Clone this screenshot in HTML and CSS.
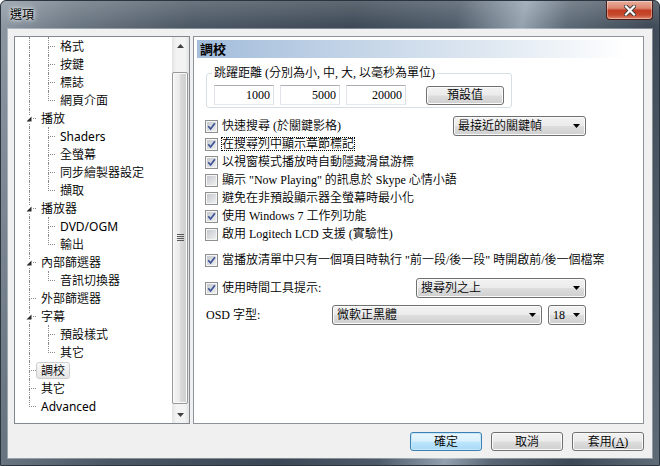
FILE: index.html
```html
<!DOCTYPE html>
<html lang="zh-Hant">
<head>
<meta charset="utf-8">
<title>選項</title>
<link rel="stylesheet" href="styles.css">
</head>
<body>
<div class="window">
  <div class="titlebar">
    <div class="title">選項</div>
    <div class="close">
      <svg width="12" height="11" viewBox="0 0 12 11"><path d="M2 1.5 L10 9.5 M10 1.5 L2 9.5" stroke="#3a3a3a" stroke-width="4" stroke-linecap="square"/><path d="M2 1.5 L10 9.5 M10 1.5 L2 9.5" stroke="#fff" stroke-width="2.2" stroke-linecap="square"/></svg>
    </div>
  </div>
  <div class="client">
    <div class="main">
      <div class="tree">
        <div class="tree-items">
          <div class="ti"><span class="g pipe"></span><span class="g c tee"></span><span class="lbl">格式</span></div>
          <div class="ti"><span class="g pipe"></span><span class="g c tee"></span><span class="lbl">按鍵</span></div>
          <div class="ti"><span class="g pipe"></span><span class="g c tee"></span><span class="lbl">標誌</span></div>
          <div class="ti"><span class="g pipe"></span><span class="g c elbow"></span><span class="lbl">網頁介面</span></div>
          <div class="ti"><span class="g c tee"><i class="exp"><svg width="17" height="18" viewBox="0 0 17 18"><rect x="6" y="6" width="8" height="8" fill="#fff"/><path d="M12.5 7.5 V12.5 H7.5 Z" fill="#2a2a2a"/></svg></i></span><span class="lbl">播放</span></div>
          <div class="ti"><span class="g pipe"></span><span class="g c tee"></span><span class="lbl">Shaders</span></div>
          <div class="ti"><span class="g pipe"></span><span class="g c tee"></span><span class="lbl">全螢幕</span></div>
          <div class="ti"><span class="g pipe"></span><span class="g c tee"></span><span class="lbl">同步繪製器設定</span></div>
          <div class="ti"><span class="g pipe"></span><span class="g c elbow"></span><span class="lbl">擷取</span></div>
          <div class="ti"><span class="g c tee"><i class="exp"><svg width="17" height="18" viewBox="0 0 17 18"><rect x="6" y="6" width="8" height="8" fill="#fff"/><path d="M12.5 7.5 V12.5 H7.5 Z" fill="#2a2a2a"/></svg></i></span><span class="lbl">播放器</span></div>
          <div class="ti"><span class="g pipe"></span><span class="g c tee"></span><span class="lbl">DVD/OGM</span></div>
          <div class="ti"><span class="g pipe"></span><span class="g c elbow"></span><span class="lbl">輸出</span></div>
          <div class="ti"><span class="g c tee"><i class="exp"><svg width="17" height="18" viewBox="0 0 17 18"><rect x="6" y="6" width="8" height="8" fill="#fff"/><path d="M12.5 7.5 V12.5 H7.5 Z" fill="#2a2a2a"/></svg></i></span><span class="lbl">內部篩選器</span></div>
          <div class="ti"><span class="g pipe"></span><span class="g c elbow"></span><span class="lbl">音訊切換器</span></div>
          <div class="ti"><span class="g c tee"></span><span class="lbl">外部篩選器</span></div>
          <div class="ti"><span class="g c tee"><i class="exp"><svg width="17" height="18" viewBox="0 0 17 18"><rect x="6" y="6" width="8" height="8" fill="#fff"/><path d="M12.5 7.5 V12.5 H7.5 Z" fill="#2a2a2a"/></svg></i></span><span class="lbl">字幕</span></div>
          <div class="ti"><span class="g pipe"></span><span class="g c tee"></span><span class="lbl">預設樣式</span></div>
          <div class="ti"><span class="g pipe"></span><span class="g c elbow"></span><span class="lbl">其它</span></div>
          <div class="ti"><span class="g c tee"></span><span class="lbl sel">調校</span></div>
          <div class="ti"><span class="g c tee"></span><span class="lbl">其它</span></div>
          <div class="ti"><span class="g c elbow"></span><span class="lbl">Advanced</span></div>
        </div>
        <div class="sb">
          <div class="sb-btn"><svg width="7" height="4" viewBox="0 0 7 4"><path d="M0 4 L3.5 0 L7 4 Z" fill="#404040"/></svg></div>
          <div class="sb-track-top"></div>
          <div class="sb-thumb"><svg width="7" height="8" viewBox="0 0 7 8"><path d="M0 0.5H7M0 2.5H7M0 4.5H7M0 6.5H7" stroke="#5a5a5a" stroke-width="1"/></svg></div>
          <div class="sb-track-bot"></div>
          <div class="sb-btn"><svg width="7" height="4" viewBox="0 0 7 4"><path d="M0 0 L7 0 L3.5 4 Z" fill="#404040"/></svg></div>
        </div>
      </div>
      <div class="page">
        <div class="page-head">調校</div>
        <fieldset class="group">
          <legend>跳躍距離 <span class="lat">(</span>分別為小<span class="lat">,</span> 中<span class="lat">,</span> 大<span class="lat">,</span> 以毫秒為單位<span class="lat">)</span></legend>
          <div class="group-row">
            <span class="edit lat">1000</span>
            <span class="edit lat">5000</span>
            <span class="edit lat">20000</span>
            <span class="btn btn-def">預設值</span>
          </div>
        </fieldset>
        <div class="checks">
          <div class="crow"><span class="cb"><svg class="ck" width="9" height="9" viewBox="0 0 9 9"><path d="M1.2 4.2 L3.6 7 L7.9 1.2" fill="none" stroke="#3d5296" stroke-width="1.7"/></svg></span><span>快速搜尋 <span class="lat">(</span>於關鍵影格<span class="lat">)</span></span><span class="combo w-key">最接近的關鍵幀<svg class="arr" width="7" height="4" viewBox="0 0 7 4"><path d="M0 0H7L3.5 4Z" fill="#000"/></svg></span></div>
          <div class="crow"><span class="cb"><svg class="ck" width="9" height="9" viewBox="0 0 9 9"><path d="M1.2 4.2 L3.6 7 L7.9 1.2" fill="none" stroke="#3d5296" stroke-width="1.7"/></svg></span><span class="focus">在搜尋列中顯示章節標記</span></div>
          <div class="crow"><span class="cb"><svg class="ck" width="9" height="9" viewBox="0 0 9 9"><path d="M1.2 4.2 L3.6 7 L7.9 1.2" fill="none" stroke="#3d5296" stroke-width="1.7"/></svg></span><span>以視窗模式播放時自動隱藏滑鼠游標</span></div>
          <div class="crow"><span class="cb"></span><span>顯示 <span class="lat">"Now Playing"</span> 的訊息於 <span class="lat">Skype</span> 心情小語</span></div>
          <div class="crow"><span class="cb"></span><span>避免在非預設顯示器全螢幕時最小化</span></div>
          <div class="crow"><span class="cb"><svg class="ck" width="9" height="9" viewBox="0 0 9 9"><path d="M1.2 4.2 L3.6 7 L7.9 1.2" fill="none" stroke="#3d5296" stroke-width="1.7"/></svg></span><span>使用 <span class="lat">Windows 7</span> 工作列功能</span></div>
          <div class="crow"><span class="cb"></span><span>啟用 <span class="lat">Logitech LCD</span> 支援 <span class="lat">(</span>實驗性<span class="lat">)</span></span></div>
          <div class="crow gap8"><span class="cb"><svg class="ck" width="9" height="9" viewBox="0 0 9 9"><path d="M1.2 4.2 L3.6 7 L7.9 1.2" fill="none" stroke="#3d5296" stroke-width="1.7"/></svg></span><span>當播放清單中只有一個項目時執行 <span class="lat">"</span>前一段<span class="lat">/</span>後一段<span class="lat">"</span> 時開啟前<span class="lat">/</span>後一個檔案</span></div>
          <div class="crow gap10"><span class="cb"><svg class="ck" width="9" height="9" viewBox="0 0 9 9"><path d="M1.2 4.2 L3.6 7 L7.9 1.2" fill="none" stroke="#3d5296" stroke-width="1.7"/></svg></span><span>使用時間工具提示<span class="lat">:</span></span><span class="combo w-tip">搜尋列之上<svg class="arr" width="7" height="4" viewBox="0 0 7 4"><path d="M0 0H7L3.5 4Z" fill="#000"/></svg></span></div>
          <div class="crow gap9"><span class="osd"><span class="lat">OSD</span> 字型<span class="lat">:</span></span><span class="combo w-font">微軟正黑體<svg class="arr" width="7" height="4" viewBox="0 0 7 4"><path d="M0 0H7L3.5 4Z" fill="#000"/></svg></span><span class="combo w-size"><span class="lat">18</span><svg class="arr" width="7" height="4" viewBox="0 0 7 4"><path d="M0 0H7L3.5 4Z" fill="#000"/></svg></span></div>
        </div>
      </div>
    </div>
    <div class="buttons">
      <span class="btn btn-main default">確定</span>
      <span class="btn btn-main">取消</span>
      <span class="btn btn-main">套用<span class="lat">(<u>A</u>)</span></span>
    </div>
  </div>
</div>
</body>
</html>
```

FILE: styles.css
```css
html, body {
  margin: 0;
  padding: 0;
}
body {
  width: 660px;
  height: 466px;
  overflow: hidden;
  font-family: "Liberation Serif", "Noto Sans CJK TC DemiLight", "Noto Sans CJK TC", serif;
  font-size: 12px;
  font-weight: 400;
  line-height: 14px;
  color: #000;
}
.lat {
  font-family: "Liberation Serif", serif;
}
.window {
  width: 660px;
  height: 466px;
  box-sizing: border-box;
  border: 1px solid #2b3540;
  border-radius: 6px 6px 0 0;
  display: flex;
  flex-direction: column;
  background:
    linear-gradient(180deg, rgba(255,255,255,0.18), rgba(255,255,255,0) 28px),
    linear-gradient(100deg, #8e99a4 0%, #6a7682 10%, #4a5663 26%, #3b4754 48%, #4d5a68 62%, #93a1ae 71%, #5b6875 77%, #3c4855 88%, #5f6b77 100%);
}
.titlebar {
  height: 28px;
  flex: none;
  display: flex;
  align-items: flex-start;
}
.title {
  margin: 6px 0 0 9px;
  font-family: "Noto Sans CJK TC", sans-serif;
  font-size: 12px;
  font-weight: 400;
  line-height: 14px;
  text-shadow: 0 0 6px rgba(255,255,255,0.95), 0 0 3px rgba(255,255,255,0.9);
}
.close {
  margin-left: auto;
  margin-right: 6px;
  width: 47px;
  height: 19px;
  box-sizing: border-box;
  border: 1px solid #4a1f1a;
  border-top: none;
  border-radius: 0 0 4px 4px;
  background: linear-gradient(180deg, #e9ad9c 0%, #db8670 40%, #c23d23 52%, #c64a2f 78%, #e38a6e 100%);
  box-shadow: inset 0 0 0 1px rgba(255,255,255,0.35);
  display: flex;
  align-items: center;
  justify-content: center;
}
.client {
  flex: 1;
  margin: 0 7px 7px 7px;
  background: #f0f0f0;
  box-shadow: 0 0 0 1px rgba(255,255,255,0.35);
  display: flex;
  flex-direction: column;
  padding: 7px 8px 7px 6px;
  box-sizing: border-box;
}
.main {
  display: flex;
  gap: 3px;
  height: 388px;
  flex: none;
}

/* tree */
.tree {
  width: 176px;
  height: 388px;
  box-sizing: border-box;
  border: 1px solid #828790;
  background: #fff;
  display: flex;
  font-family: "Noto Sans", "Noto Sans CJK TC DemiLight", "Noto Sans CJK TC", sans-serif;
}
.tree-items {
  flex: 1;
  display: flex;
  flex-direction: column;
  padding-left: 4px;
  overflow: hidden;
}
.ti {
  height: 18px;
  display: flex;
  align-items: center;
  flex: none;
}
.g {
  flex: none;
  width: 19px;
  height: 18px;
  display: grid;
  grid-template-columns: 10px 1fr;
  grid-template-rows: 10px 8px;
}
.g.c {
  width: 17px;
}
.g::before,
.g::after {
  content: "";
  grid-column: 2;
  box-sizing: border-box;
}
.g::before { grid-row: 1; }
.g::after { grid-row: 2; }
.pipe::before, .pipe::after,
.tee::before, .tee::after,
.elbow::before {
  border-left: 1px dotted #8a8a8a;
}
.tee::before, .elbow::before {
  border-bottom: 1px dotted #8a8a8a;
}
.exp {
  grid-area: 1 / 1 / 3 / 3;
  z-index: 1;
  display: block;
  width: 17px;
  height: 18px;
}
.exp svg { display: block; }
.lbl {
  height: 17px;
  box-sizing: border-box;
  border: 1px solid transparent;
  padding: 0 4px;
  line-height: 15px;
  white-space: nowrap;
}
.lbl.sel {
  background: linear-gradient(180deg, #f9f9f9, #e4e4e4);
  border-color: #cdcdcd;
  border-radius: 3px;
}

/* scrollbar */
.sb {
  width: 17px;
  flex: none;
  display: flex;
  flex-direction: column;
  background: linear-gradient(90deg, #e3e3e3 0%, #f3f3f3 25%, #f3f3f3 75%, #e3e3e3 100%);
}
.sb-btn {
  height: 17px;
  flex: none;
  display: flex;
  align-items: center;
  justify-content: center;
}
.sb-btn svg { display: block; }
.sb-track-top { height: 18px; flex: none; }
.sb-track-bot { height: 2px; flex: none; }
.sb-thumb {
  flex: 1;
  margin: 0 1px 0 0;
  border: 1px solid #979797;
  border-radius: 2px;
  background: linear-gradient(90deg, #f4f4f4 0%, #ebebeb 45%, #d9d9d9 55%, #cdcdcd 100%);
  box-shadow: inset 0 0 0 1px #fbfbfb;
  display: flex;
  align-items: center;
  justify-content: center;
}
.sb-thumb svg { display: block; }

/* page */
.page {
  width: 451px;
  height: 388px;
  box-sizing: border-box;
  border: 1px solid #8e9299;
  background: #fff;
  padding: 3px 3px 0 3px;
}
.page-head {
  height: 18px;
  box-sizing: border-box;
  padding-left: 3px;
  font-family: "Noto Sans CJK TC", sans-serif;
  font-weight: bold;
  font-size: 13px;
  line-height: 18px;
  background: linear-gradient(90deg, #a3bddb 0%, #c3d4e7 35%, #e3ebf3 70%, #ffffff 97%);
}
.group {
  margin: 8px 0 0 9px;
  width: 306px;
  box-sizing: border-box;
  border: 1px solid #d5dfe5;
  border-radius: 3px;
  padding: 5px 7px 2px 7px;
  min-inline-size: 0;
}
.group legend {
  padding: 0 2px;
  margin-left: -2px;
  line-height: 14px;
}
.group-row {
  display: flex;
  align-items: center;
}
.edit {
  width: 60px;
  height: 20px;
  box-sizing: border-box;
  border: 1px solid;
  border-color: #abadb3 #dbdfe6 #e3e9ef #e2e3ea;
  background: #fff;
  text-align: right;
  padding-right: 3px;
  line-height: 18px;
  margin-right: 6px;
}
.edit:nth-child(3) { margin-right: 20px; }
.btn {
  box-sizing: border-box;
  height: 19px;
  border: 1px solid #707070;
  border-radius: 3px;
  background: linear-gradient(180deg, #f2f2f2 0%, #ebebeb 48%, #dddddd 52%, #cfcfcf 100%);
  box-shadow: inset 0 0 0 1px #fbfbfb;
  display: flex;
  align-items: center;
  justify-content: center;
  line-height: 14px;
}
.btn-def { width: 78px; }
.checks {
  margin: 9px 0 0 8px;
  width: 381px;
  display: flex;
  flex-direction: column;
}
.crow {
  height: 18px;
  display: flex;
  align-items: center;
  white-space: nowrap;
}
.crow.gap8 { margin-top: 8px; }
.crow.gap10 { margin-top: 10px; }
.crow.gap9 { margin-top: 9px; }
.cb {
  flex: none;
  width: 13px;
  height: 13px;
  box-sizing: border-box;
  border: 1px solid #8e8f8f;
  padding: 1px;
  margin-right: 4px;
  background: linear-gradient(135deg, #c4c8cd, #eeeff0) content-box, #f6f6f6;
  display: flex;
  align-items: center;
  justify-content: center;
}
.ck { display: block; }
.focus {
  outline: 1px dotted #000;
  outline-offset: 0;
  line-height: 12px;
}
.osd { margin-left: 1px; }
.combo {
  margin-left: auto;
  height: 20px;
  box-sizing: border-box;
  border: 1px solid #707070;
  border-radius: 3px;
  background: linear-gradient(180deg, #f2f2f2 0%, #ebebeb 48%, #dddddd 52%, #cfcfcf 100%);
  box-shadow: inset 0 0 0 1px #fbfbfb;
  display: flex;
  align-items: center;
  padding: 0 5px 0 4px;
}
.combo .arr {
  margin-left: auto;
  display: block;
}
.w-key { width: 133px; }
.w-tip { width: 170px; }
.w-font { width: 210px; }
.w-size { width: 38px; margin-left: 6px; }

/* bottom buttons */
.buttons {
  margin-top: 8px;
  display: flex;
  justify-content: flex-end;
  gap: 9px;
}
.btn-main { width: 72px; }
.btn.default {
  border-color: #3c7fb1;
  background: linear-gradient(180deg, #eaf6fd 0%, #d9f0fc 48%, #bee6fd 52%, #a7d9f5 100%);
  box-shadow: inset 0 0 0 1px #c6e8fa;
}
```
